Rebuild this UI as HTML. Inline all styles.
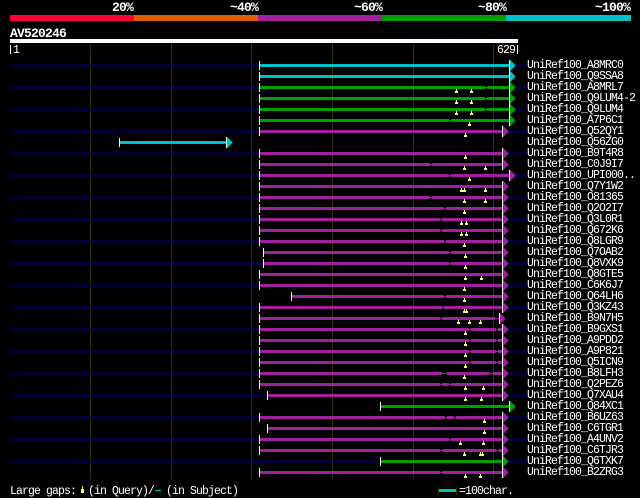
<!DOCTYPE html>
<html><head><meta charset="utf-8"><style>
html,body{margin:0;padding:0;background:#000;width:640px;height:498px;overflow:hidden}
svg{display:block}
text{font-family:"Liberation Mono",monospace;fill:#fff;white-space:pre}
.n text{font-size:11.5px;letter-spacing:-.9px}
.h text{font-size:13px;font-weight:bold;letter-spacing:-.8px}
</style></head><body>
<svg width="640" height="498" viewBox="0 0 640 498" xmlns="http://www.w3.org/2000/svg" shape-rendering="crispEdges">
<rect x="10" y="15" width="124" height="6" fill="#ff0033"/>
<rect x="134" y="15" width="124" height="6" fill="#e06000"/>
<rect x="258" y="15" width="124" height="6" fill="#a020a0"/>
<rect x="382" y="15" width="124" height="6" fill="#00a000"/>
<rect x="506" y="15" width="125" height="6" fill="#00c0c8"/>
<g class="h">
<text x="112" y="11">20%</text>
<text x="230" y="11">~40%</text>
<text x="354" y="11">~60%</text>
<text x="478" y="11">~80%</text>
<text x="595" y="11">~100%</text>
<text x="10" y="37">AV520246</text>
</g>
<text x="402" y="38" style="font-size:8.3px;fill:#000033">AlignView.pm Beta rel.7</text>
<rect x="10" y="39" width="508" height="4" fill="#fff"/>
<rect x="10" y="45" width="1" height="9" fill="#fff"/>
<rect x="517" y="45" width="1" height="9" fill="#fff"/>
<g class="n"><text x="13" y="53">1</text><text x="497" y="53">629</text></g>
<path fill="#333300" d="M90 44h1v435h-1zM171 44h1v435h-1zM251 44h1v435h-1zM332 44h1v435h-1zM413 44h1v435h-1zM493 44h1v435h-1z"/>
<path fill="#000033" d="M10 64H259v3H10zM515 64H527v3H515zM10 86H259v3H10zM515 86H527v3H515zM10 108H259v3H10zM515 108H527v3H515zM10 130H259v3H10zM508 130H527v3H508zM10 152H259v3H10zM508 152H527v3H508zM10 174H259v3H10zM515 174H527v3H515zM10 196H259v3H10zM508 196H527v3H508zM10 218H259v3H10zM508 218H527v3H508zM10 240H259v3H10zM508 240H527v3H508zM10 262H263v3H10zM508 262H527v3H508zM10 284H259v3H10zM508 284H527v3H508zM10 306H259v3H10zM508 306H527v3H508zM10 328H259v3H10zM508 328H527v3H508zM10 350H259v3H10zM508 350H527v3H508zM10 372H259v3H10zM508 372H527v3H508zM10 394H267v3H10zM508 394H527v3H508zM10 416H259v3H10zM508 416H527v3H508zM10 438H259v3H10zM508 438H527v3H508zM10 460H380v3H10zM508 460H527v3H508z"/>
<path fill="#00c0c8" d="M259 64H510v3H259zM259 75H510v3H259zM119 141H227v3H119z"/>
<path fill="#00a000" d="M259 86H510v3H259zM259 97H510v3H259zM259 108H510v3H259zM259 119H510v3H259zM380 405H510v3H380zM380 460H503v3H380z"/>
<path fill="#a020a0" d="M259 130H503v3H259zM259 152H503v3H259zM259 163H503v3H259zM259 174H510v3H259zM259 185H503v3H259zM259 196H503v3H259zM259 207H503v3H259zM259 218H503v3H259zM259 229H503v3H259zM259 240H503v3H259zM263 251H503v3H263zM263 262H503v3H263zM259 273H503v3H259zM259 284H503v3H259zM291 295H503v3H291zM259 306H503v3H259zM259 317H500v3H259zM259 328H503v3H259zM259 339H503v3H259zM259 350H503v3H259zM259 361H503v3H259zM259 372H503v3H259zM259 383H503v3H259zM267 394H503v3H267zM259 416H503v3H259zM267 427H503v3H267zM259 438H503v3H259zM259 449H503v3H259zM259 471H503v3H259z"/>
<!-- gaps -->
<path fill="#000" d="M485 86h2v1h-2zM485 88h2v1h-2zM485 97h2v1h-2zM485 99h2v1h-2zM485 108h2v1h-2zM485 110h2v1h-2zM449 119h2v1h-2zM449 121h2v1h-2zM430 163h2v1h-2zM430 165h2v1h-2zM449 174h2v1h-2zM449 176h2v1h-2zM430 196h2v1h-2zM430 198h2v1h-2zM444 207h2v1h-2zM444 209h2v1h-2zM440 218h2v1h-2zM440 220h2v1h-2zM440 229h2v1h-2zM440 231h2v1h-2zM444 240h2v1h-2zM444 242h2v1h-2zM449 251h2v1h-2zM449 253h2v1h-2zM449 262h2v1h-2zM449 264h2v1h-2zM444 295h2v1h-2zM444 297h2v1h-2zM442 306h2v1h-2zM442 308h2v1h-2zM440 317h2v1h-2zM440 319h2v1h-2zM495 317h4v1h-4zM495 319h4v1h-4zM469 328h2v1h-2zM469 330h2v1h-2zM496 328h2v1h-2zM496 330h2v1h-2zM469 339h2v1h-2zM469 341h2v1h-2zM496 339h2v1h-2zM496 341h2v1h-2zM469 350h2v1h-2zM469 352h2v1h-2zM496 350h2v1h-2zM496 352h2v1h-2zM469 361h2v1h-2zM469 363h2v1h-2zM496 361h2v1h-2zM496 363h2v1h-2zM442 372h5v1h-5zM442 374h5v1h-5zM489 372h4v1h-4zM489 374h4v1h-4zM440 383h2v1h-2zM440 385h2v1h-2zM449 383h2v1h-2zM449 385h2v1h-2zM445 416h2v1h-2zM445 418h2v1h-2zM454 416h2v1h-2zM454 418h2v1h-2zM449 438h2v1h-2zM449 440h2v1h-2zM440 449h2v1h-2zM440 451h2v1h-2zM496 449h3v1h-3zM496 451h3v1h-3zM440 471h2v1h-2zM440 473h2v1h-2z"/>
<!-- start ticks -->
<path fill="#fff" d="M259 61h1v9h-1zM259 72h1v9h-1zM259 83h1v9h-1zM259 94h1v9h-1zM259 105h1v9h-1zM259 116h1v9h-1zM259 127h1v9h-1zM119 138h1v9h-1zM259 149h1v9h-1zM259 160h1v9h-1zM259 171h1v9h-1zM259 182h1v9h-1zM259 193h1v9h-1zM259 204h1v9h-1zM259 215h1v9h-1zM259 226h1v9h-1zM259 237h1v9h-1zM263 248h1v9h-1zM263 259h1v9h-1zM259 270h1v9h-1zM259 281h1v9h-1zM291 292h1v9h-1zM259 303h1v9h-1zM259 314h1v9h-1zM259 325h1v9h-1zM259 336h1v9h-1zM259 347h1v9h-1zM259 358h1v9h-1zM259 369h1v9h-1zM259 380h1v9h-1zM267 391h1v9h-1zM380 402h1v9h-1zM259 413h1v9h-1zM267 424h1v9h-1zM259 435h1v9h-1zM259 446h1v9h-1zM380 457h1v9h-1zM259 468h1v9h-1z"/>
<!-- end arrows white -->
<path fill="#fff" d="M509 60h1v11h-1zM509 71h1v11h-1zM509 82h1v11h-1zM509 93h1v11h-1zM509 104h1v11h-1zM509 115h1v11h-1zM502 126h1v11h-1zM226 137h1v11h-1zM502 148h1v11h-1zM502 159h1v11h-1zM509 170h1v11h-1zM502 181h1v11h-1zM502 192h1v11h-1zM502 203h1v11h-1zM502 214h1v11h-1zM502 225h1v11h-1zM502 236h1v11h-1zM502 247h1v11h-1zM502 258h1v11h-1zM502 269h1v11h-1zM502 280h1v11h-1zM502 291h1v11h-1zM502 302h1v11h-1zM499 313h1v11h-1zM502 324h1v11h-1zM502 335h1v11h-1zM502 346h1v11h-1zM502 357h1v11h-1zM502 368h1v11h-1zM502 379h1v11h-1zM502 390h1v11h-1zM509 401h1v11h-1zM502 412h1v11h-1zM502 423h1v11h-1zM502 434h1v11h-1zM502 445h1v11h-1zM502 456h1v11h-1zM502 467h1v11h-1z"/>
<path fill="#00c0c8" d="M510 60l6 5.5-6 5.5zM510 71l6 5.5-6 5.5zM227 137l6 5.5-6 5.5z"/>
<path fill="#00a000" d="M510 82l6 5.5-6 5.5zM510 93l6 5.5-6 5.5zM510 104l6 5.5-6 5.5zM510 115l6 5.5-6 5.5zM510 401l6 5.5-6 5.5zM503 456l6 5.5-6 5.5z"/>
<path fill="#a020a0" d="M503 126l6 5.5-6 5.5zM503 148l6 5.5-6 5.5zM503 159l6 5.5-6 5.5zM510 170l6 5.5-6 5.5zM503 181l6 5.5-6 5.5zM503 192l6 5.5-6 5.5zM503 203l6 5.5-6 5.5zM503 214l6 5.5-6 5.5zM503 225l6 5.5-6 5.5zM503 236l6 5.5-6 5.5zM503 247l6 5.5-6 5.5zM503 258l6 5.5-6 5.5zM503 269l6 5.5-6 5.5zM503 280l6 5.5-6 5.5zM503 291l6 5.5-6 5.5zM503 302l6 5.5-6 5.5zM500 313l6 5.5-6 5.5zM503 324l6 5.5-6 5.5zM503 335l6 5.5-6 5.5zM503 346l6 5.5-6 5.5zM503 357l6 5.5-6 5.5zM503 368l6 5.5-6 5.5zM503 379l6 5.5-6 5.5zM503 390l6 5.5-6 5.5zM503 412l6 5.5-6 5.5zM503 423l6 5.5-6 5.5zM503 434l6 5.5-6 5.5zM503 445l6 5.5-6 5.5zM503 467l6 5.5-6 5.5z"/>
<!-- query gap markers -->
<path fill="#ffff66" d="M456 89h1v2h1v2h-3v-2h1zM471 89h1v2h1v2h-3v-2h1zM456 100h1v2h1v2h-3v-2h1zM471 100h1v2h1v2h-3v-2h1zM456 111h1v2h1v2h-3v-2h1zM471 111h1v2h1v2h-3v-2h1zM469 122h1v2h1v2h-3v-2h1zM465 133h1v2h1v2h-3v-2h1zM465 155h1v2h1v2h-3v-2h1zM464 166h1v2h1v2h-3v-2h1zM485 166h1v2h1v2h-3v-2h1zM469 177h1v2h1v2h-3v-2h1zM461 188h1v2h1v2h-3v-2h1zM464 188h1v2h1v2h-3v-2h1zM485 188h1v2h1v2h-3v-2h1zM464 199h1v2h1v2h-3v-2h1zM485 199h1v2h1v2h-3v-2h1zM464 210h1v2h1v2h-3v-2h1zM461 221h1v2h1v2h-3v-2h1zM466 221h1v2h1v2h-3v-2h1zM461 232h1v2h1v2h-3v-2h1zM466 232h1v2h1v2h-3v-2h1zM464 243h1v2h1v2h-3v-2h1zM465 254h1v2h1v2h-3v-2h1zM465 265h1v2h1v2h-3v-2h1zM465 276h1v2h1v2h-3v-2h1zM481 276h1v2h1v2h-3v-2h1zM464 287h1v2h1v2h-3v-2h1zM464 298h1v2h1v2h-3v-2h1zM464 309h1v2h1v2h-3v-2h1zM466 309h1v2h1v2h-3v-2h1zM458 320h1v2h1v2h-3v-2h1zM469 320h1v2h1v2h-3v-2h1zM480 320h1v2h1v2h-3v-2h1zM465 331h1v2h1v2h-3v-2h1zM465 342h1v2h1v2h-3v-2h1zM465 353h1v2h1v2h-3v-2h1zM465 364h1v2h1v2h-3v-2h1zM464 375h1v2h1v2h-3v-2h1zM465 386h1v2h1v2h-3v-2h1zM483 386h1v2h1v2h-3v-2h1zM465 397h1v2h1v2h-3v-2h1zM481 397h1v2h1v2h-3v-2h1zM484 419h1v2h1v2h-3v-2h1zM484 430h1v2h1v2h-3v-2h1zM460 441h1v2h1v2h-3v-2h1zM483 441h1v2h1v2h-3v-2h1zM464 452h1v2h1v2h-3v-2h1zM480 452h1v2h1v2h-3v-2h1zM482 452h1v2h1v2h-3v-2h1zM465 474h1v2h1v2h-3v-2h1zM480 474h1v2h1v2h-3v-2h1z"/>
<g class="n">
<text x="527" y="68">UniRef100_A8MRC0</text>
<text x="527" y="79">UniRef100_Q9SSA8</text>
<text x="527" y="90">UniRef100_A8MRL7</text>
<text x="527" y="101">UniRef100_Q9LUM4-2</text>
<text x="527" y="112">UniRef100_Q9LUM4</text>
<text x="527" y="123">UniRef100_A7P6C1</text>
<text x="527" y="134">UniRef100_Q52QY1</text>
<text x="527" y="145">UniRef100_Q56ZG0</text>
<text x="527" y="156">UniRef100_B9T4R8</text>
<text x="527" y="167">UniRef100_C0J9I7</text>
<text x="527" y="178">UniRef100_UPI000..</text>
<text x="527" y="189">UniRef100_Q7Y1W2</text>
<text x="527" y="200">UniRef100_O81365</text>
<text x="527" y="211">UniRef100_Q2O2I7</text>
<text x="527" y="222">UniRef100_Q3L0R1</text>
<text x="527" y="233">UniRef100_Q672K6</text>
<text x="527" y="244">UniRef100_Q8LGR9</text>
<text x="527" y="255">UniRef100_Q7OAB2</text>
<text x="527" y="266">UniRef100_Q8VXK9</text>
<text x="527" y="277">UniRef100_Q8GTE5</text>
<text x="527" y="288">UniRef100_C6K6J7</text>
<text x="527" y="299">UniRef100_Q64LH6</text>
<text x="527" y="310">UniRef100_Q3KZ43</text>
<text x="527" y="321">UniRef100_B9N7H5</text>
<text x="527" y="332">UniRef100_B9GXS1</text>
<text x="527" y="343">UniRef100_A9PDD2</text>
<text x="527" y="354">UniRef100_A9P821</text>
<text x="527" y="365">UniRef100_Q5ICN9</text>
<text x="527" y="376">UniRef100_B8LFH3</text>
<text x="527" y="387">UniRef100_Q2PEZ6</text>
<text x="527" y="398">UniRef100_Q7XAU4</text>
<text x="527" y="409">UniRef100_Q84XC1</text>
<text x="527" y="420">UniRef100_B6UZ63</text>
<text x="527" y="431">UniRef100_C6TGR1</text>
<text x="527" y="442">UniRef100_A4UNV2</text>
<text x="527" y="453">UniRef100_C6TJR3</text>
<text x="527" y="464">UniRef100_Q6TXK7</text>
<text x="527" y="475">UniRef100_B2ZRG3</text>
<text x="10" y="494">Large gaps:</text>
<text x="88" y="494">(in Query)/</text>
<text x="166" y="494">(in Subject)</text>
<text x="459" y="494">=100char.</text>
</g>
<path fill="#ffff66" d="M82 486h1v3h1v4h-3v-4h1z"/>
<rect x="155" y="490" width="6" height="1" fill="#00c0c8"/>
<rect x="438" y="487" width="1" height="8" fill="#333300"/>
<rect x="456" y="487" width="1" height="8" fill="#333300"/>
<rect x="439" y="489" width="17" height="3" fill="#00c0c8"/>
</svg>
</body></html>
